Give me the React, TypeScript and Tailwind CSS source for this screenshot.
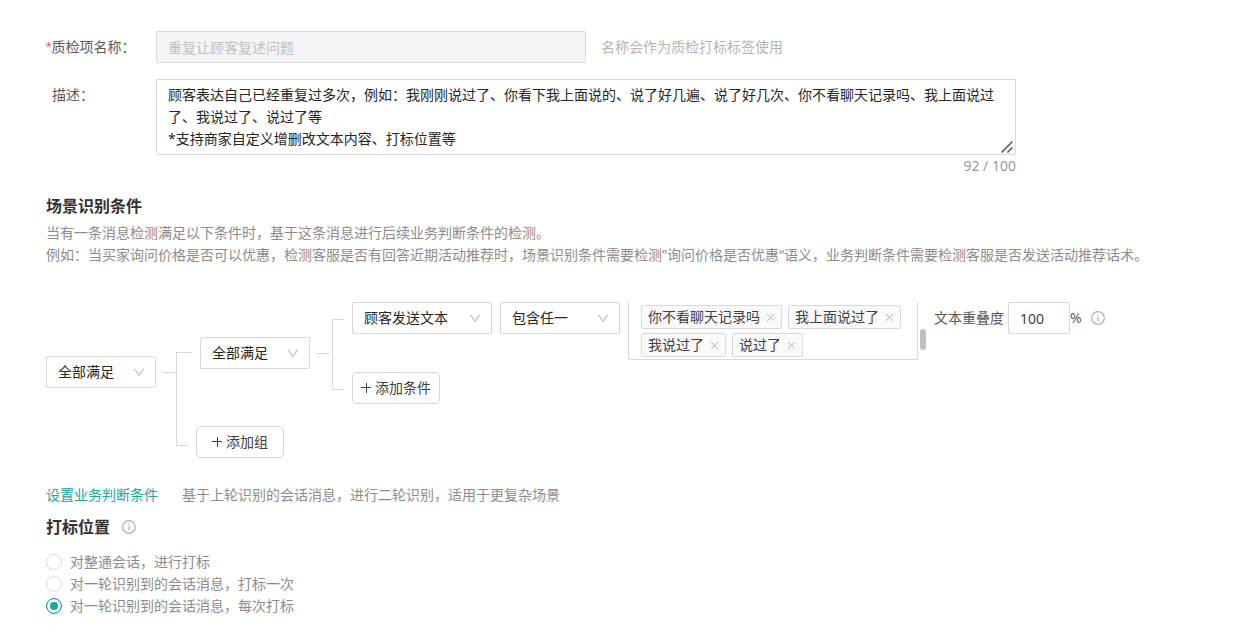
import React from "react";

const RULE_TEXT = `顾客表达自己已经重复过多次，例如：我刚刚说过了、你看下我上面说的、说了好几遍、说了好几次、你不看聊天记录吗、我上面说过了、我说过了、说过了等
*支持商家自定义增删改文本内容、打标位置等`;

const MARK_OPTIONS = [
    "对整通会话，进行打标",
    "对一轮识别到的会话消息，打标一次",
    "对一轮识别到的会话消息，每次打标",
];

function InfoIcon() {
    return (
        <svg width="14" height="14" viewBox="0 0 14 14" fill="none" stroke="#b0b0b0" strokeWidth="1.2" className="block shrink-0" aria-hidden="true">
            <circle cx="7" cy="7" r="6.3" />
            <path d="M7 6v4.4M7 3.4v1.3" />
        </svg>
    );
}

function Select({ label, options, className }: { label: string, options: string[], className: string }) {
    return (
        <div className={`relative h-8 shrink-0 ${className}`}>
            <select
                aria-label={label}
                className="block w-full h-full appearance-none rounded-xs border border-[#d9d9d9] bg-white pl-[11px] pr-8 text-sm text-[#262626] focus:outline-none"
            >
                {options.map((o) => <option key={o}>{o}</option>)}
            </select>
            <svg
                width="12" height="12" viewBox="0 0 12 12" fill="none" stroke="#bfbfbf" strokeWidth="1.1"
                className="absolute right-[11px] top-[10px] pointer-events-none" aria-hidden="true"
            >
                <path d="M1.3 2.6 6 9.3 10.7 2.6" />
            </svg>
        </div>
    );
}

function AddButton({ children }: { children: React.ReactNode }) {
    return (
        <button className="flex h-8 w-[88px] items-center justify-center gap-1 rounded-sm border border-[#d9d9d9] bg-white text-sm text-[#404040]">
            <svg width="10" height="10" viewBox="0 0 10 10" stroke="#404040" aria-hidden="true">
                <path d="M5.5 0v10M0 4.5h10" />
            </svg>
            {children}
        </button>
    );
}

function TagBox() {
    const [tags, setTags] = React.useState(["你不看聊天记录吗", "我上面说过了", "我说过了", "说过了"]);
    return (
        <div className="flex h-[58px] shrink-0 gap-[2px]">
            <ul className="flex w-[290px] flex-wrap content-start gap-x-[6px] gap-y-1 rounded-b-xs border border-t-0 border-[#d9d9d9] pl-3 pt-[3px]">
                {tags.map((tag) => (
                    <li key={tag} className="flex h-6 items-center gap-[6px] rounded-xs border border-[#d9d9d9] bg-[#fafafa] px-[6px]">
                        <span className="text-[#404040]">{tag}</span>
                        <button aria-label={`删除${tag}`} onClick={() => { setTags(tags.filter((t) => t !== tag)) }}>
                            <svg width="9" height="9" viewBox="0 0 9 9" stroke="#b5b5b5" aria-hidden="true">
                                <path d="M1 1l7 7M8 1 1 8" />
                            </svg>
                        </button>
                    </li>
                ))}
            </ul>
            <div className="mt-[27px] h-[21px] w-[6px] rounded-full bg-[#c1c1c1]" />
        </div>
    );
}

function ConditionRow() {
    return (
        <div className="flex items-start gap-2">
            <Select label="消息类型" options={["顾客发送文本"]} className="w-[140px]" />
            <Select label="匹配方式" options={["包含任一"]} className="w-[120px]" />
            <TagBox />
            <div className="flex h-8 shrink-0 items-center text-[#595959]">
                <label htmlFor="overlap">文本重叠度</label>
                <input
                    id="overlap"
                    defaultValue="100"
                    className="ml-1 h-8 w-[62px] rounded-xs border border-[#d9d9d9] px-[11px] text-[#404040] focus:outline-none"
                />
                <span>%</span>
                <span className="ml-[9px]"><InfoIcon /></span>
            </div>
        </div>
    );
}

function ConditionTree() {
    return (
        <div className="mt-9 flex items-start">
            <div className="pt-[54px]">
                <Select label="组间关系" options={["全部满足", "任一满足"]} className="w-[110px]" />
            </div>
            <div className="ml-[6px] mt-[70px] h-px w-[14px] shrink-0 bg-[#d9d9d9]" />
            <div className="mt-[50px] shrink-0">
                <div className="h-[47px] w-4 border-l border-t border-[#d9d9d9]" />
                <div className="h-[47px] w-3 border-l border-b border-[#d9d9d9]" />
            </div>
            <div className="ml-1 flex flex-col gap-[22px]">
                <div className="flex items-start pl-1">
                    <div className="pt-[35px]">
                        <Select label="条件关系" options={["全部满足", "任一满足"]} className="w-[110px]" />
                    </div>
                    <div className="ml-[6px] mt-[51px] h-px w-[14px] shrink-0 bg-[#d9d9d9]" />
                    <div className="ml-[2px] mr-2 mt-[17px] h-[71px] w-3 shrink-0 border-y border-l border-[#d9d9d9]" />
                    <div className="flex flex-col gap-3">
                        <ConditionRow />
                        <AddButton>添加条件</AddButton>
                    </div>
                </div>
                <AddButton>添加组</AddButton>
            </div>
        </div>
    );
}

function MarkPosition() {
    const [selected, setSelected] = React.useState(2);
    return (
        <div role="radiogroup" aria-labelledby="mark-title" className="mt-[13px] text-[#8c8c8c]">
            {MARK_OPTIONS.map((text, i) => (
                <label key={text} className="flex items-center gap-2">
                    <input
                        type="radio"
                        name="mark"
                        checked={selected === i}
                        onChange={() => { setSelected(i) }}
                        className="size-4 appearance-none rounded-full border border-[#d9d9d9] bg-white checked:border-[#13a8a2] checked:bg-[#13a8a2] checked:shadow-[inset_0_0_0_3px_#fff]"
                    />
                    {text}
                </label>
            ))}
        </div>
    );
}

export default function App() {
    return (
        <main className="bg-white pl-[46px] pr-4 pt-[31px] text-sm leading-[22px] font-['Noto_Sans','Noto_Sans_CJK_SC',sans-serif]">
            <div className="flex items-center">
                <label htmlFor="name" className="w-[110px] shrink-0 text-[#595959]">
                    <span className="text-[#ff4d4f] font-['Liberation_Sans',sans-serif]">*</span>质检项名称：
                </label>
                <input
                    id="name"
                    disabled
                    value="重复让顾客复述问题"
                    className="h-8 w-[430px] rounded-xs border border-[#d9d9d9] bg-[#f5f5f5] px-[11px] text-[#bfbfbf]"
                />
                <span className="ml-[15px] text-[#b5b5b5]">名称会作为质检打标标签使用</span>
            </div>

            <div className="mt-4 flex items-start">
                <label htmlFor="desc" className="w-[110px] shrink-0 pl-[6px] pt-[5px] text-[#595959]">描述：</label>
                <div className="w-full max-w-[860px]">
                    <div className="relative">
                        <textarea
                            id="desc"
                            rows={3}
                            defaultValue={RULE_TEXT}
                            className="block w-full resize-none overflow-hidden rounded-xs border border-[#d9d9d9] px-[11px] py-1 text-[#262626] focus:outline-none"
                        />
                        <svg
                            width="12" height="12" viewBox="0 0 12 12" stroke="#555" strokeWidth="1.5"
                            className="absolute bottom-[2px] right-[3px] pointer-events-none" aria-hidden="true"
                        >
                            <path d="M.5 11.5 11.5.5M6.5 11.5l5-5" />
                        </svg>
                    </div>
                    <div className="text-right text-[#999]">92 / 100</div>
                </div>
            </div>

            <h2 className="mt-[18px] text-base leading-[22px] font-bold text-[#333]">场景识别条件</h2>
            <p className="mt-[5px] text-[#8c8c8c]">
                当有一条消息检测满足以下条件时，基于这条消息进行后续业务判断条件的检测。<br />
                例如：当买家询问价格是否可以优惠，检测客服是否有回答近期活动推荐时，场景识别条件需要检测”询问价格是否优惠“语义，业务判断条件需要检测客服是否发送活动推荐话术。
            </p>

            <ConditionTree />

            <div className="mt-[26px] flex items-center gap-6">
                <a href="#judge" className="text-[#13a8a2]">设置业务判断条件</a>
                <span className="text-[#8c8c8c]">基于上轮识别的会话消息，进行二轮识别，适用于更复杂场景</span>
            </div>

            <div className="mt-[10px] flex items-center gap-3">
                <h2 id="mark-title" className="text-base leading-[22px] font-bold text-[#333]">打标位置</h2>
                <InfoIcon />
            </div>
            <MarkPosition />
        </main>
    );
}
